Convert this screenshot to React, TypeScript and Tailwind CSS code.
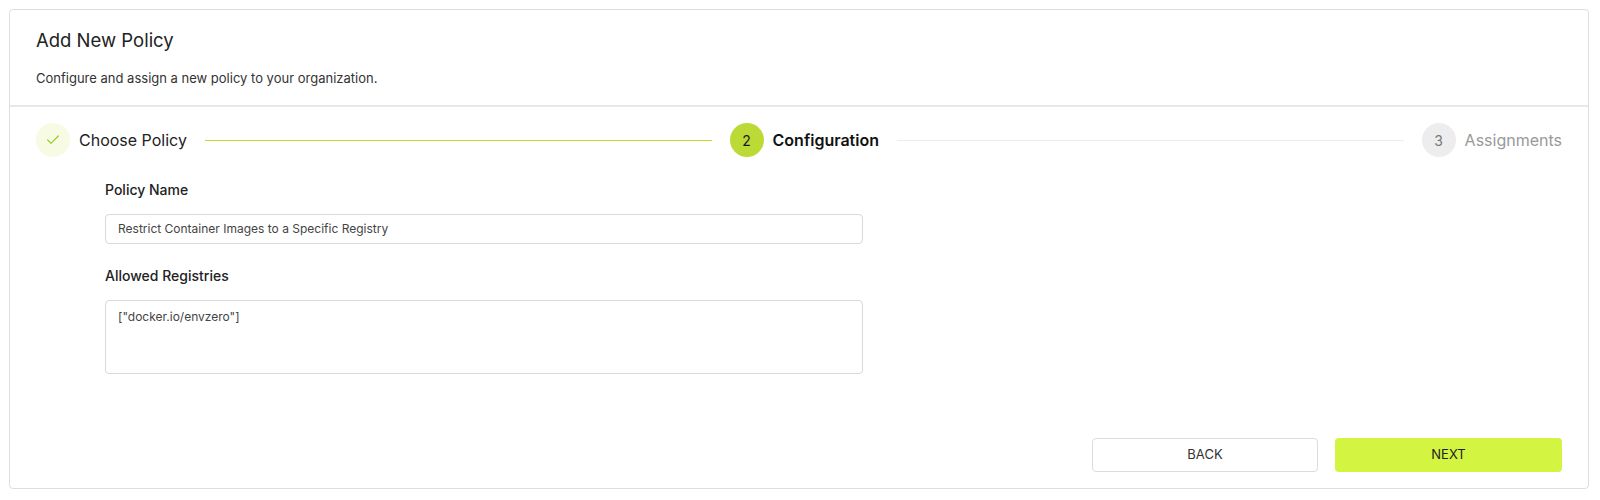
import { Check } from 'lucide-react';

type StepProps = {
  index: number;
  label: string;
  state: 'done' | 'active' | 'todo';
};

const Step = ({ index, label, state }: StepProps) => {
  const circleClass =
    state === 'done'
      ? 'bg-[#f7fbe4] text-[#9acb1f]'
      : state === 'active'
        ? 'bg-[#bcda35] text-[#1a1a1a]'
        : 'bg-[#ededed] text-[#777]';
  const labelClass =
    state === 'done'
      ? 'text-[#222] font-normal'
      : state === 'active'
        ? 'text-[#111] font-semibold'
        : 'text-[#999] font-normal';
  return (
    <div className="flex items-center shrink-0">
      <div
        className={`w-[34px] h-[34px] rounded-full flex items-center justify-center text-[14px] ${circleClass}`}
      >
        {state === 'done' ? <Check size={16} strokeWidth={1.8} /> : index}
      </div>
      <div className={`ml-[9px] text-[16px] ${labelClass}`}>{label}</div>
    </div>
  );
};

const StepLine = ({ done }: { done: boolean }) => (
  <div
    className={`flex-1 mx-[18px] h-px ${done ? 'bg-[#bddc2c]' : 'bg-[#ececec]'}`}
  />
);

export default function App() {
  return (
    <div
      className="bg-white w-[1600px] h-[500px] pl-[9px] pr-[11px] pt-[9px] text-[#222]"
      style={{ fontFamily: 'Inter, "Liberation Sans", sans-serif' }}
    >
      <div className="border border-[#dedede] rounded-[4px] flex flex-col">
        {/* header */}
        <div className="px-[26px] pt-[18px] pb-[18px] border-b-2 border-[#e8e8e8]">
          <div className="text-[18.5px] leading-[24px] text-[#222]">
            Add New Policy
          </div>
          <div className="mt-[17px] text-[13px] leading-[18px] text-[#333]">
            Configure and assign a new policy to your organization.
          </div>
        </div>

        {/* stepper */}
        <div className="flex items-center px-[26px] pt-[16px]">
          <Step index={1} label="Choose Policy" state="done" />
          <StepLine done />
          <Step index={2} label="Configuration" state="active" />
          <StepLine done={false} />
          <Step index={3} label="Assignments" state="todo" />
        </div>

        {/* form */}
        <div className="ml-[95px] w-[758px] flex flex-col mt-[23px]">
          <label className="text-[14px] leading-[20px] font-medium text-[#222]">
            Policy Name
          </label>
          <div className="mt-[14px] h-[30px] border border-[#d9d9d9] rounded-[4px] px-[12px] flex items-center text-[12px] text-[#444]">
            Restrict Container Images to a Specific Registry
          </div>
          <label className="mt-[22px] text-[14px] leading-[20px] font-medium text-[#222]">
            Allowed Registries
          </label>
          <div className="mt-[14px] h-[74px] border border-[#d9d9d9] rounded-[4px] px-[12px] pt-[7px] text-[12px] text-[#444]">
            ["docker.io/envzero"]
          </div>
        </div>

        {/* actions */}
        <div className="flex justify-end gap-[17px] px-[26px] mt-[64px] pb-[16px]">
          <button className="w-[226px] h-[34px] border border-[#dcdcdc] rounded-[4px] bg-white text-[13px] text-[#333] uppercase">
            Back
          </button>
          <button className="w-[227px] h-[34px] rounded-[4px] bg-[#d3f541] text-[13px] text-[#222] uppercase">
            Next
          </button>
        </div>
      </div>
    </div>
  );
}
